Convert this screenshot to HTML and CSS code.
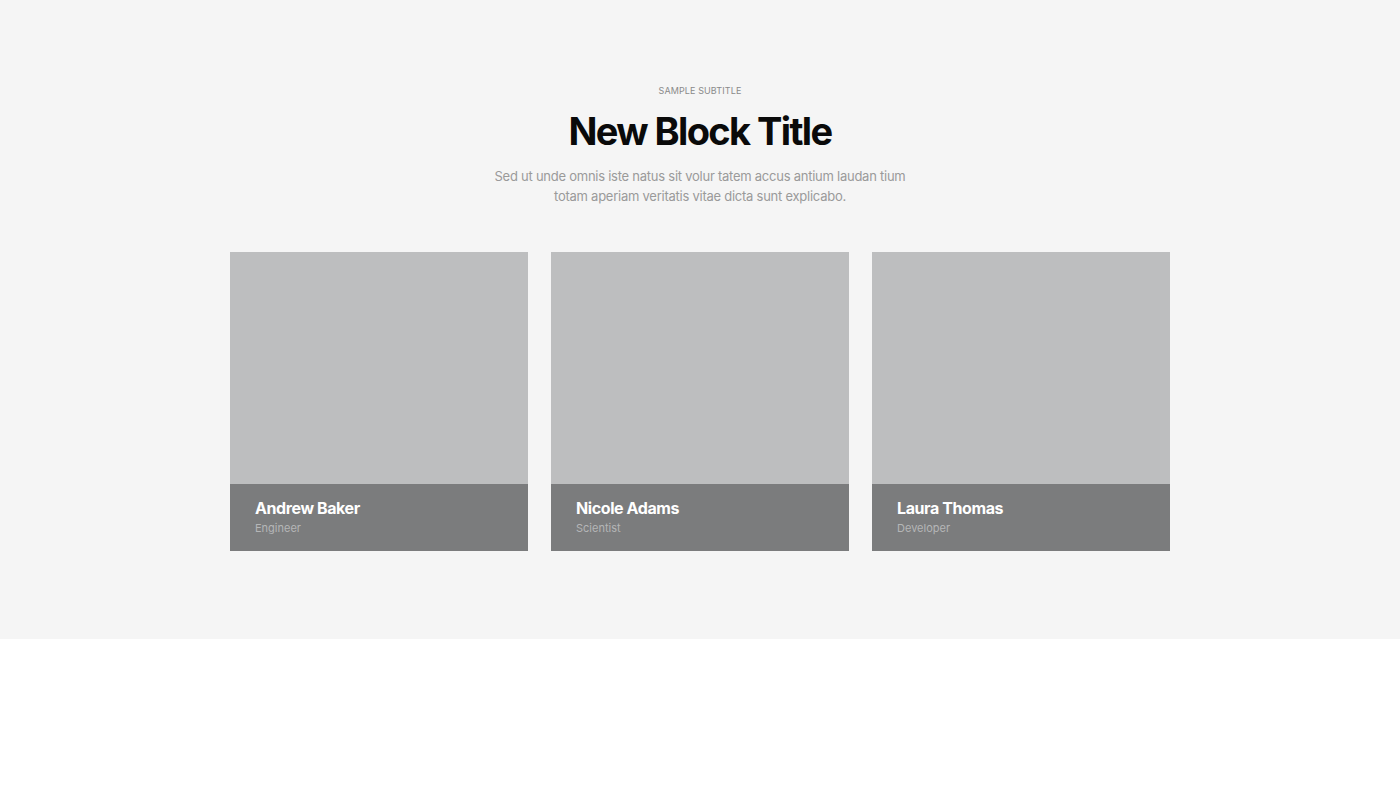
FILE: index.html
```html
<!DOCTYPE html>
<html lang="en">
<head>
<meta charset="utf-8">
<title>New Block Title</title>
<link rel="stylesheet" href="styles.css">
</head>
<body>
<section class="team">
  <div class="container">
    <header class="heading">
      <p class="subtitle">Sample Subtitle</p>
      <h1 class="title">New Block Title</h1>
      <p class="lead">Sed ut unde omnis iste natus sit volur tatem accus antium laudan tium totam aperiam veritatis vitae dicta sunt explicabo.</p>
    </header>
    <div class="cards">
      <article class="card">
        <div class="card-info">
          <h3 class="name">Andrew Baker</h3>
          <p class="role">Engineer</p>
        </div>
      </article>
      <article class="card">
        <div class="card-info">
          <h3 class="name">Nicole Adams</h3>
          <p class="role">Scientist</p>
        </div>
      </article>
      <article class="card">
        <div class="card-info">
          <h3 class="name">Laura Thomas</h3>
          <p class="role">Developer</p>
        </div>
      </article>
    </div>
  </div>
</section>
</body>
</html>
```
FILE: styles.css
```css
* { box-sizing: border-box; }
html, body { margin: 0; padding: 0; background: #ffffff; }
body { font-family: "Inter", "Noto Sans", sans-serif; }

.team {
  background: #f5f5f5;
  padding: 84px 0 88px;
}
.container {
  width: 940px;
  margin: 0 auto;
}
.heading {
  text-align: center;
  display: flex;
  flex-direction: column;
  align-items: center;
}
.subtitle {
  margin: 0;
  font-size: 9px;
  line-height: 14px;
  text-transform: uppercase;
  color: #8a8a8a;
  letter-spacing: 0.1px;
}
.title {
  margin: 9px 0 0;
  font-size: 38px;
  line-height: 48px;
  font-weight: 700;
  letter-spacing: -1.6px;
  color: #0a0a0a;
}
.lead {
  margin: 11px 0 0;
  max-width: 420px;
  font-size: 13px;
  line-height: 20px;
  color: #9a9a9a;
  letter-spacing: -0.25px;
}
.cards {
  margin-top: 46px;
  display: grid;
  grid-template-columns: repeat(3, 298px);
  gap: 23px;
}
.card {
  height: 299px;
  background: #bdbebf;
  display: flex;
  flex-direction: column;
  justify-content: flex-end;
}
.card-info {
  height: 67px;
  background: #7b7c7d;
  padding: 14px 25px 0;
}
.name {
  margin: 0;
  font-size: 16px;
  line-height: 20px;
  font-weight: 700;
  color: #ffffff;
  letter-spacing: -0.4px;
}
.role {
  margin: 3px 0 0;
  font-size: 11px;
  line-height: 15px;
  color: #b5b6b7;
}
```
